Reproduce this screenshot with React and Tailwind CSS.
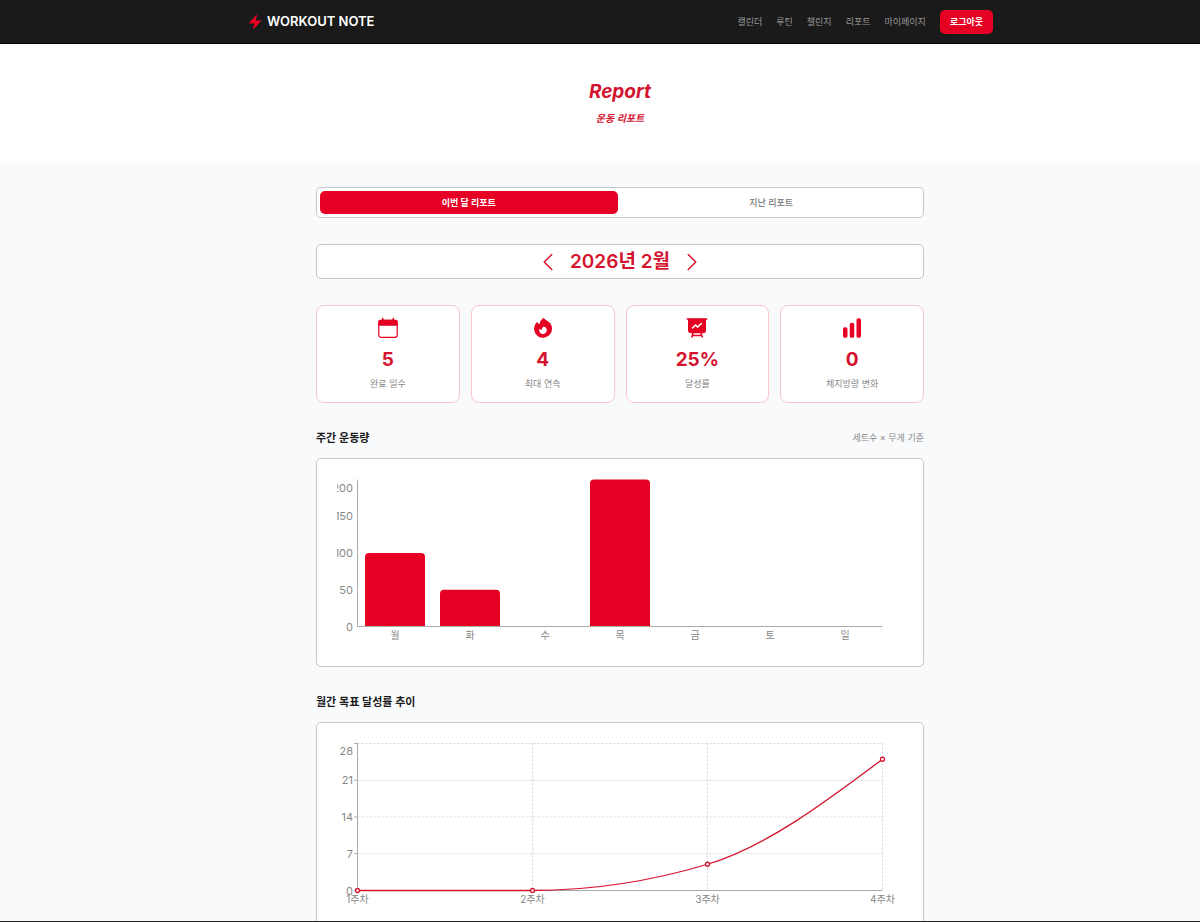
import { useState } from "react";
import {
  HiBolt,
  HiFire,
  HiPresentationChartLine,
  HiChartBar,
  HiOutlineChevronLeft,
  HiOutlineChevronRight,
} from "react-icons/hi2";

const MENUS = ["캘린더", "루틴", "챌린지", "리포트", "마이페이지"];

// calendar outline with a filled header
function CalendarIcon({ className }) {
  return (
    <svg viewBox="0 0 24 24" className={className} fill="currentColor">
      <rect x="2.8" y="4.3" width="18.4" height="17" rx="2.4" fill="none" stroke="currentColor" strokeWidth="1.2" />
      <path d="M5 3.7h14a2.8 2.8 0 0 1 2.8 2.8v3.3H2.2V6.5A2.8 2.8 0 0 1 5 3.7z" />
      <path d="M6.8 2.6v2M17.2 2.6v2" stroke="currentColor" strokeWidth="1.5" strokeLinecap="round" />
    </svg>
  );
}

const STATS = [
  { icon: CalendarIcon, value: "5", label: "완료 일수" },
  { icon: HiFire, value: "4", label: "최대 연속" },
  { icon: HiPresentationChartLine, value: "25%", label: "달성률" },
  { icon: HiChartBar, value: "0", label: "체지방량 변화" },
];

const WEEKLY = [
  { day: "월", volume: 100 },
  { day: "화", volume: 50 },
  { day: "수", volume: 0 },
  { day: "목", volume: 200 },
  { day: "금", volume: 0 },
  { day: "토", volume: 0 },
  { day: "일", volume: 0 },
];

const MONTHLY = [
  { week: "1주차", rate: 0 },
  { week: "2주차", rate: 0 },
  { week: "3주차", rate: 5 },
  { week: "4주차", rate: 25 },
];

// plot area shared by both charts
const LEFT = 20.5;
const RIGHT = 545.5;
const TOP = 0.5;
const BOTTOM = 147.5;
const PLOT_W = RIGHT - LEFT;
const PLOT_H = BOTTOM - TOP;

function WeeklyBarChart() {
  const max = 200;
  const band = PLOT_W / WEEKLY.length;
  const y = (v) => BOTTOM - (v / max) * PLOT_H;

  return (
    <svg viewBox="0 0 566 167" className="block w-full overflow-hidden text-[11px]">
      {WEEKLY.filter((d) => d.volume > 0).map((d) => {
        const x = LEFT + band * WEEKLY.indexOf(d) + 7.5;
        const top = y(d.volume);
        return (
          <path
            key={d.day}
            className="fill-[#e60023]"
            d={`M${x} ${BOTTOM}V${top + 4}a4 4 0 0 1 4 -4h52a4 4 0 0 1 4 4V${BOTTOM}z`}
          />
        );
      })}
      <path d={`M${LEFT} ${TOP}V${BOTTOM}H${RIGHT}`} fill="none" stroke="#aaa" />
      {[0, 50, 100, 150, 200].map((v) => (
        <text key={v} x="16" y={v === max ? 13 : y(v) + 4} textAnchor="end" fill="#888">
          {v}
        </text>
      ))}
      {WEEKLY.map((d, i) => (
        <text key={d.day} x={LEFT + band * (i + 0.5)} y="160" textAnchor="middle" fill="#888" fontSize="10">
          {d.day}
        </text>
      ))}
    </svg>
  );
}

function MonthlyLineChart() {
  const max = 28;
  const step = PLOT_W / (MONTHLY.length - 1);
  const x = (i) => LEFT + step * i;
  const y = (v) => BOTTOM - (v / max) * PLOT_H;

  // monotone cubic, so that the curve never dips under the points
  const slopes = MONTHLY.slice(1).map((d, i) => (y(d.rate) - y(MONTHLY[i].rate)) / step);
  const tangents = MONTHLY.map((_, i) => {
    if (i === 0 || i === MONTHLY.length - 1) return 0;
    const a = slopes[i - 1];
    const b = slopes[i];
    if (a * b <= 0) return 0;
    return 2 * Math.sign(a) * Math.min(Math.abs(a), Math.abs(b), Math.abs(a + b) / 4);
  });
  const last = MONTHLY.length - 1;
  tangents[last] = (3 * slopes[last - 1] - tangents[last - 1]) / 2;

  let line = `M${x(0)} ${y(MONTHLY[0].rate)}`;
  for (let i = 1; i <= last; i++) {
    const third = step / 3;
    const from = y(MONTHLY[i - 1].rate);
    const to = y(MONTHLY[i].rate);
    line += `C${x(i - 1) + third} ${from + third * tangents[i - 1]} ${x(i) - third} ${to - third * tangents[i]} ${x(i)} ${to}`;
  }

  return (
    <svg viewBox="0 0 566 167" className="block w-full overflow-visible text-[11px]">
      <g stroke="#d4d4d4" strokeDasharray="2 2">
        {[7, 14, 21, 28].map((v) => (
          <path key={v} d={`M${LEFT} ${y(v)}H${RIGHT}`} />
        ))}
        {[1, 2, 3].map((i) => (
          <path key={i} d={`M${x(i)} ${TOP}V${BOTTOM}`} />
        ))}
      </g>
      <path d={`M${LEFT} ${TOP}V${BOTTOM}H${RIGHT}`} fill="none" stroke="#aaa" />
      {[0, 7, 14, 21, 28].map((v) => (
        <g key={v}>
          <path d={`M17 ${y(v)}H${LEFT}`} stroke="#aaa" />
          <text x="16" y={v === max ? 12 : y(v) + 4} textAnchor="end" fill="#888">
            {v}
          </text>
        </g>
      ))}
      <path d={line} fill="none" stroke="#d4142f" strokeWidth="1.3" />
      {MONTHLY.map((d, i) => (
        <g key={d.week}>
          <circle cx={x(i)} cy={y(d.rate)} r="2" fill="#fff" stroke="#d4142f" strokeWidth="1.3" />
          <text x={x(i)} y="160" textAnchor="middle" fill="#888" fontSize="10">
            {d.week}
          </text>
        </g>
      ))}
    </svg>
  );
}

export default function App() {
  const [tab, setTab] = useState("current");
  const [month, setMonth] = useState({ year: 2026, month: 2 });

  const moveMonth = (diff) => {
    const d = new Date(month.year, month.month - 1 + diff, 1);
    setMonth({ year: d.getFullYear(), month: d.getMonth() + 1 });
  };

  const tabClass = (name) =>
    name === tab
      ? "h-[23px] flex-1 rounded-[5px] bg-[#e60023] text-[9px] font-semibold text-white"
      : "h-[23px] flex-1 rounded-[5px] text-[9px] font-medium text-[#777]";

  return (
    <div className="flex h-screen flex-col border-b border-[#222] bg-[#f9fafc] font-['Inter','Noto_Sans_CJK_KR',sans-serif] text-[#1a1a1a]">
      <header className="shrink-0 bg-[#1a1a1a] pl-10 shadow-[inset_0_-1px_#000]">
        <div className="mx-auto flex h-11 max-w-[746px] items-center justify-between">
          <a href="#" className="flex items-center gap-1 text-[13px] font-semibold text-white">
            <HiBolt className="size-4 text-[#e60023]" />
            WORKOUT NOTE
          </a>
          <nav className="flex items-center gap-3.5 text-[9px] text-[#999]">
            {MENUS.map((menu) => (
              <a key={menu} href="#">
                {menu}
              </a>
            ))}
            <button className="h-6 rounded-[5px] bg-[#e60023] px-2.5 font-semibold text-white">로그아웃</button>
          </nav>
        </div>
      </header>

      <main className="min-h-0 flex-1 overflow-y-auto [scrollbar-width:none]">
        <div className="flex h-[117px] flex-col items-center bg-white pt-9 pl-10 text-[#d4142f] italic">
          <h1 className="text-[19px] leading-6 font-bold">Report</h1>
          <p className="mt-2 text-[10px] leading-3 font-semibold">운동 리포트</p>
        </div>

        <div className="pt-[26px] pl-10">
          <div className="mx-auto max-w-[608px]">
            <div className="flex gap-[5px] rounded-[5px] border border-[#c8c8c8] bg-white p-[3px]">
              <button className={tabClass("current")} onClick={() => setTab("current")}>
                이번 달 리포트
              </button>
              <button className={tabClass("past")} onClick={() => setTab("past")}>
                지난 리포트
              </button>
            </div>

            <div className="mt-[26px] flex h-[35px] items-center justify-center gap-2.5 rounded-[5px] border border-[#c8c8c8] bg-white text-[#d4142f]">
              <button aria-label="이전 달" onClick={() => moveMonth(-1)}>
                <HiOutlineChevronLeft className="size-6" />
              </button>
              <h2 className="text-[19px] leading-6 font-semibold">
                {month.year}년 {month.month}월
              </h2>
              <button aria-label="다음 달" onClick={() => moveMonth(1)}>
                <HiOutlineChevronRight className="size-6" />
              </button>
            </div>

            <div className="mt-[26px] grid grid-cols-4 gap-[11px]">
              {STATS.map(({ icon: Icon, value, label }) => (
                <div key={label} className="flex h-[98px] flex-col items-center rounded-lg border border-[#fcc5ca] bg-white pt-2.5">
                  <Icon className="size-6 text-[#e60023]" />
                  <strong className="mt-2 text-[19px] leading-6 font-bold text-[#d4142f]">{value}</strong>
                  <span className="mt-1 text-[9px] leading-4 text-[#888]">{label}</span>
                </div>
              ))}
            </div>

            <section className="mt-[27px]">
              <div className="flex h-4 items-center justify-between">
                <h3 className="text-[11px] leading-4 font-semibold">주간 운동량</h3>
                <span className="text-[9px] text-[#888]">세트수 × 무게 기준</span>
              </div>
              <div className="mt-3 rounded-[5px] border border-[#c8c8c8] bg-white p-5">
                <WeeklyBarChart />
              </div>
            </section>

            <section className="mt-[27px]">
              <h3 className="text-[11px] leading-4 font-semibold">월간 목표 달성률 추이</h3>
              <div className="mt-3 rounded-[5px] border border-[#c8c8c8] bg-white p-5">
                <MonthlyLineChart />
              </div>
            </section>
          </div>
        </div>
      </main>
    </div>
  );
}
